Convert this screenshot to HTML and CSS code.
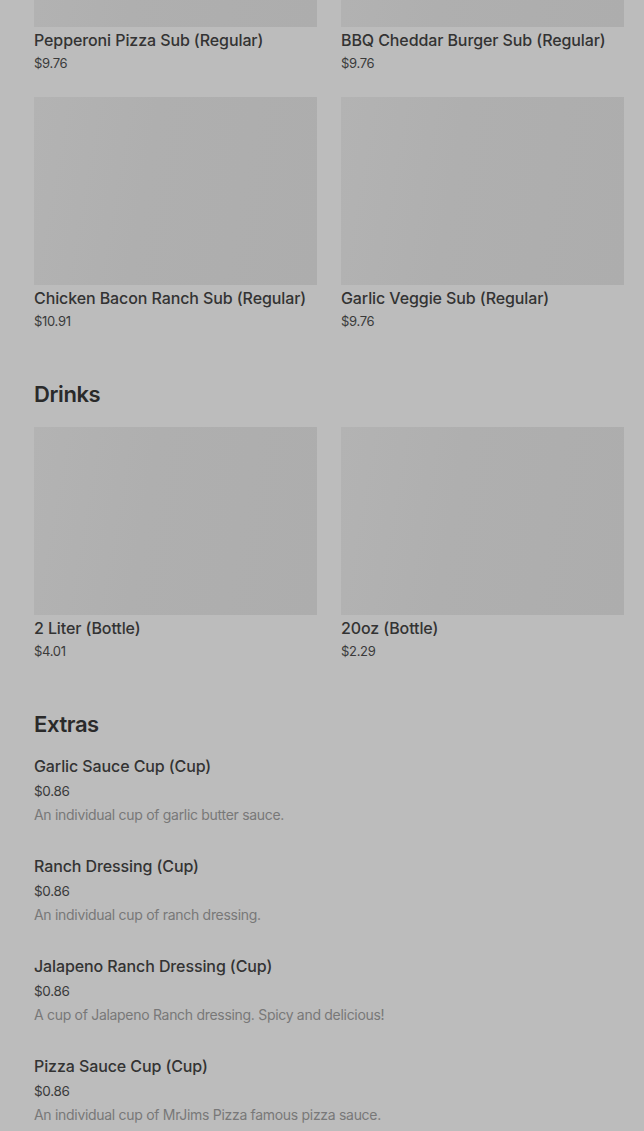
FILE: index.html
```html
<!DOCTYPE html>
<html lang="en">
<head>
<meta charset="utf-8">
<title>Menu</title>
<link rel="stylesheet" href="styles.css">
</head>
<body>
<main class="menu">
  <section class="section section-first">
    <div class="grid">
      <div class="card">
        <div class="thumb"></div>
        <div class="name">Pepperoni Pizza Sub (Regular)</div>
        <div class="price">$9.76</div>
      </div>
      <div class="card">
        <div class="thumb"></div>
        <div class="name">BBQ Cheddar Burger Sub (Regular)</div>
        <div class="price">$9.76</div>
      </div>
      <div class="card">
        <div class="thumb"></div>
        <div class="name">Chicken Bacon Ranch Sub (Regular)</div>
        <div class="price">$10.91</div>
      </div>
      <div class="card">
        <div class="thumb"></div>
        <div class="name">Garlic Veggie Sub (Regular)</div>
        <div class="price">$9.76</div>
      </div>
    </div>
  </section>

  <section class="section">
    <h2 class="heading">Drinks</h2>
    <div class="grid">
      <div class="card">
        <div class="thumb"></div>
        <div class="name">2 Liter (Bottle)</div>
        <div class="price">$4.01</div>
      </div>
      <div class="card">
        <div class="thumb"></div>
        <div class="name">20oz (Bottle)</div>
        <div class="price">$2.29</div>
      </div>
    </div>
  </section>

  <section class="section">
    <h2 class="heading heading-list">Extras</h2>
    <div class="list">
      <div class="item">
        <div class="name">Garlic Sauce Cup (Cup)</div>
        <div class="price price-list">$0.86</div>
        <div class="desc">An individual cup of garlic butter sauce.</div>
      </div>
      <div class="item">
        <div class="name">Ranch Dressing (Cup)</div>
        <div class="price price-list">$0.86</div>
        <div class="desc">An individual cup of ranch dressing.</div>
      </div>
      <div class="item">
        <div class="name">Jalapeno Ranch Dressing (Cup)</div>
        <div class="price price-list">$0.86</div>
        <div class="desc">A cup of Jalapeno Ranch dressing. Spicy and delicious!</div>
      </div>
      <div class="item">
        <div class="name">Pizza Sauce Cup (Cup)</div>
        <div class="price price-list">$0.86</div>
        <div class="desc">An individual cup of MrJims Pizza famous pizza sauce.</div>
      </div>
    </div>
  </section>
</main>
</body>
</html>
```

FILE: styles.css
```css
html, body {
  margin: 0;
  padding: 0;
}

body {
  background: #bcbcbc;
  font-family: Inter, "Noto Sans", "Liberation Sans", sans-serif;
  color: #2e2e2e;
  overflow: hidden;
}

.menu {
  padding: 0 20px 0 34px;
  margin-top: -161px;
}

.section {
  margin-top: 50px;
}

.section-first {
  margin-top: 0;
}

.heading {
  margin: 0 0 19px 0;
  font-size: 22px;
  line-height: 28px;
  font-weight: 600;
  letter-spacing: -0.4px;
  color: #2a2a2a;
}

.heading-list {
  margin-bottom: 18px;
}

.grid {
  display: grid;
  grid-template-columns: 283px 283px;
  column-gap: 24px;
  row-gap: 25px;
}

.card {
  display: flex;
  flex-direction: column;
}

.thumb {
  height: 188px;
  background: linear-gradient(100deg, #b3b3b3 0%, #afafaf 40%, #adadad 100%);
}

.name {
  margin-top: 3px;
  font-size: 16px;
  line-height: 20px;
  font-weight: 500;
  letter-spacing: -0.1px;
  color: #333333;
}

.price {
  margin-top: 4px;
  font-size: 13px;
  line-height: 18px;
  font-weight: 400;
  letter-spacing: -0.3px;
  color: #3a3a3a;
}

.list {
  display: flex;
  flex-direction: column;
  gap: 32px;
}

.item .name {
  margin-top: 0;
}

.price-list {
  margin-top: 6px;
  font-size: 13.5px;
}

.desc {
  margin-top: 6px;
  font-size: 14px;
  line-height: 18px;
  letter-spacing: -0.3px;
  color: #787878;
}
```
